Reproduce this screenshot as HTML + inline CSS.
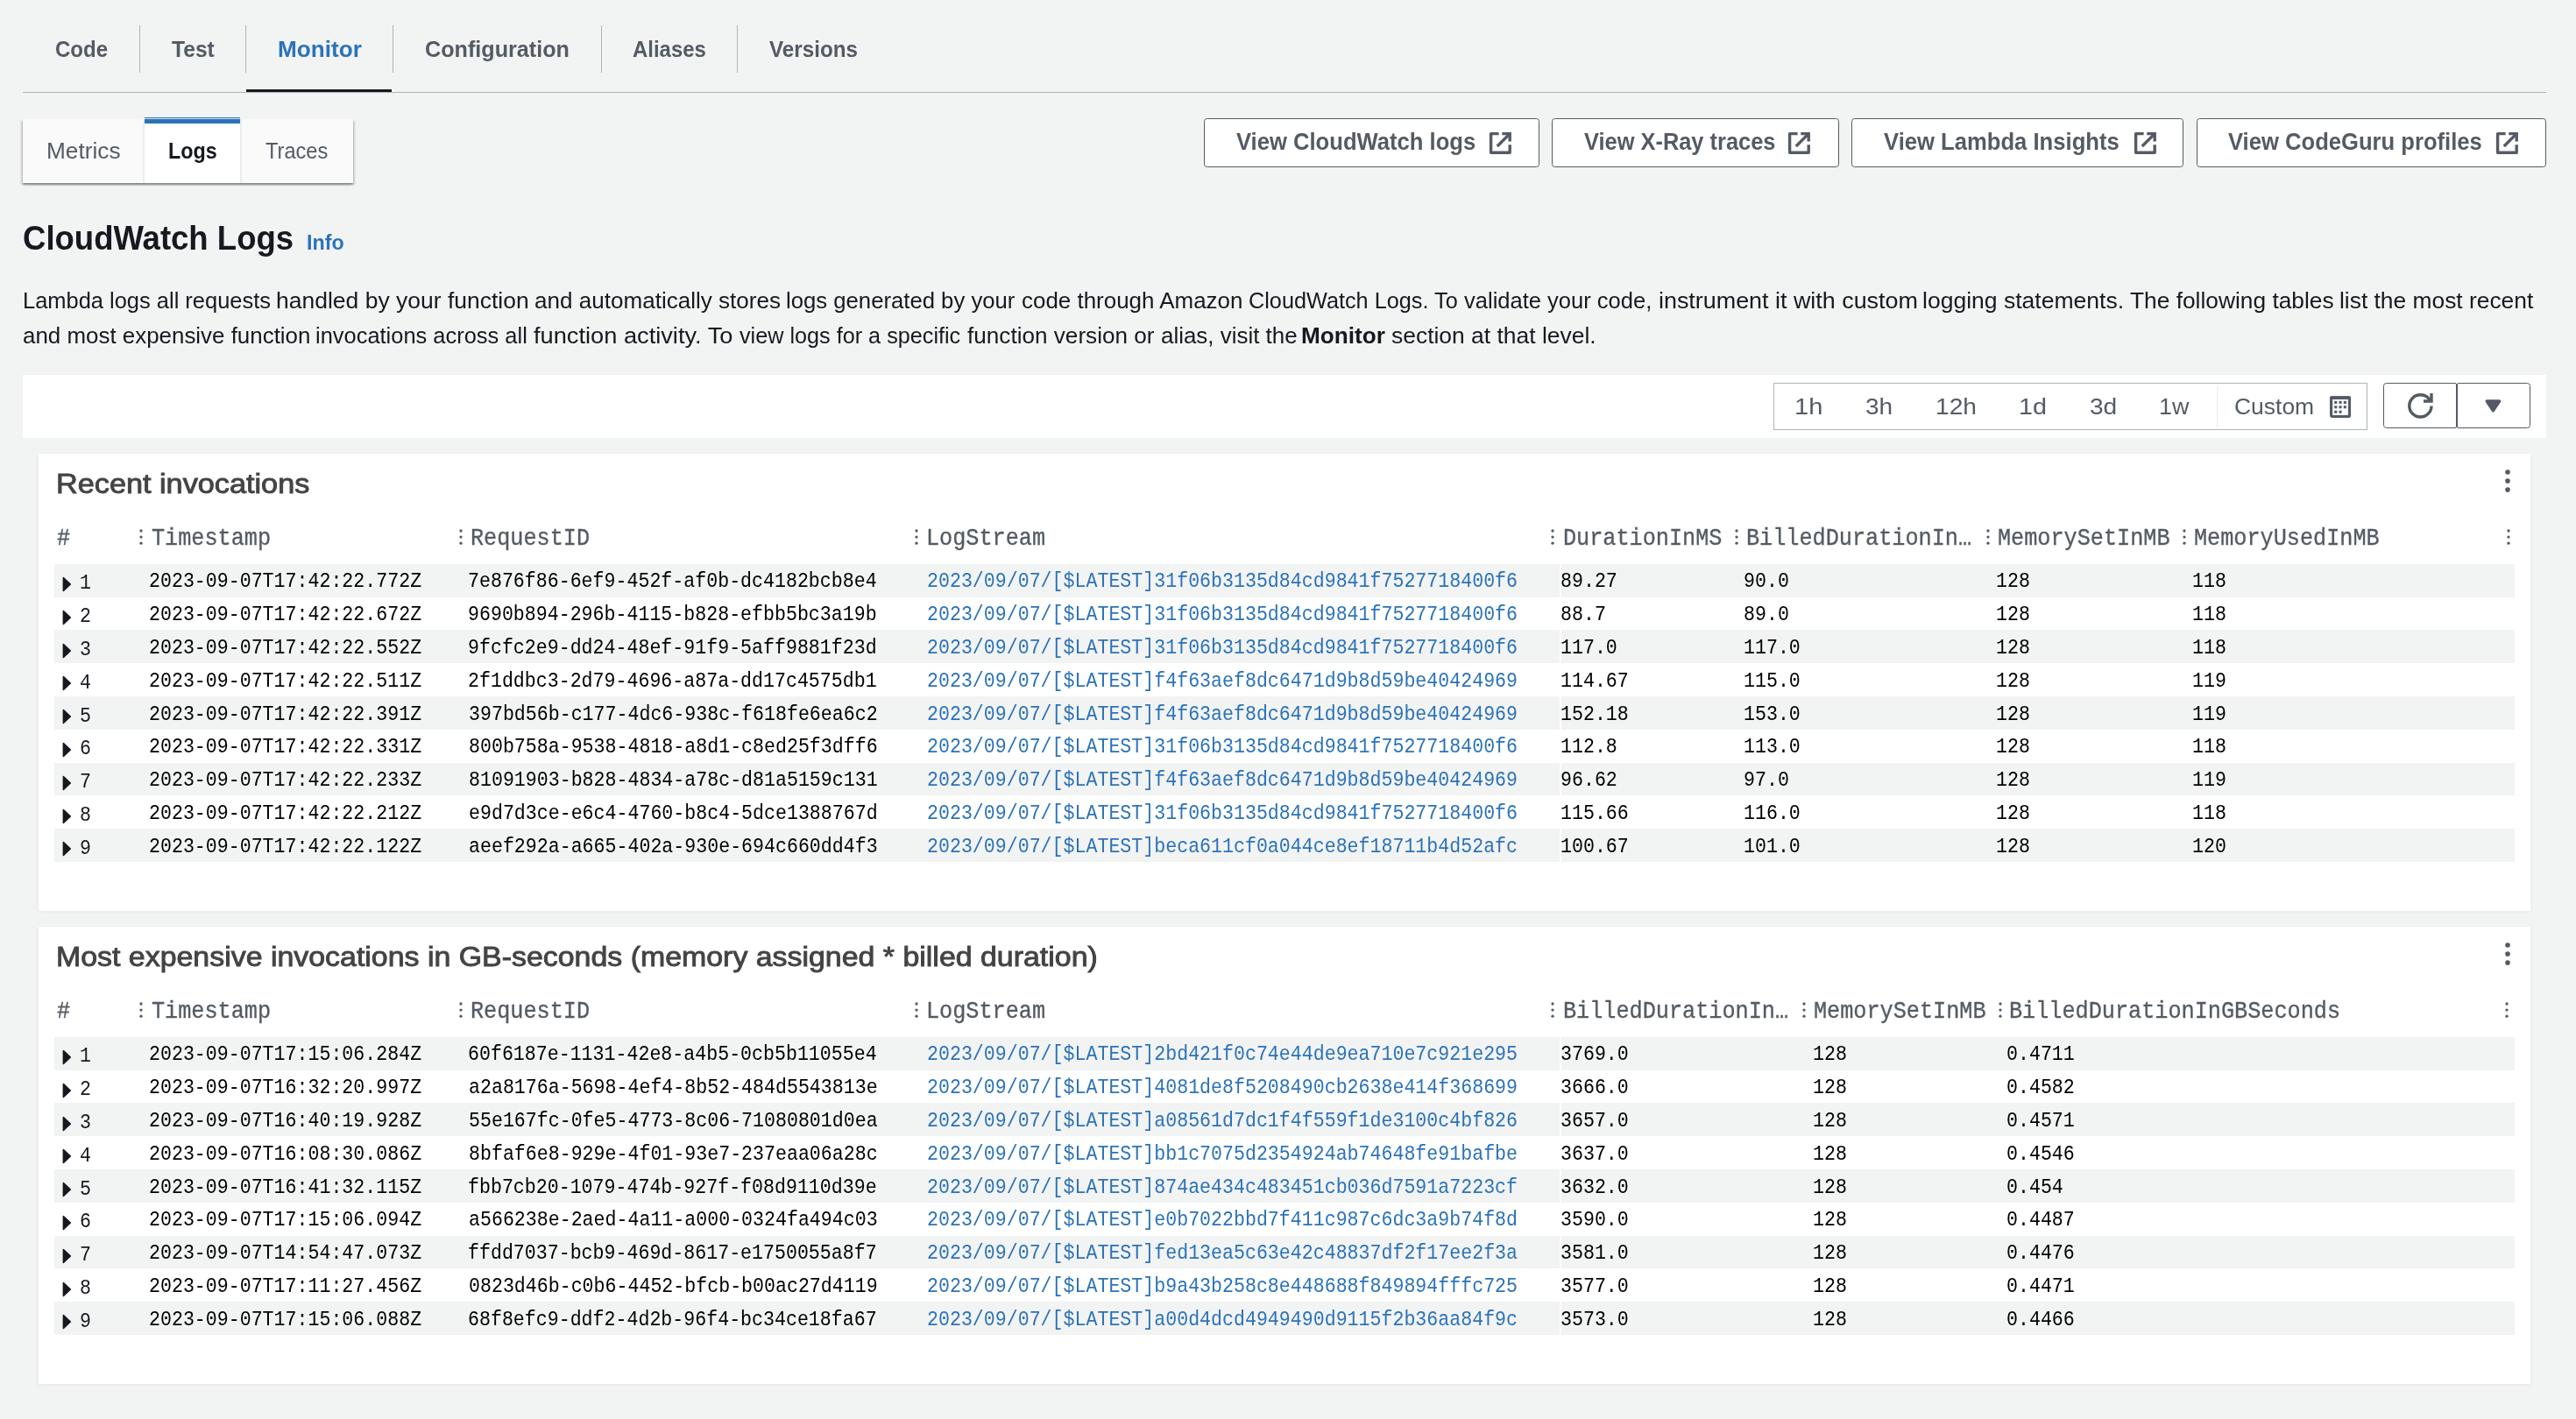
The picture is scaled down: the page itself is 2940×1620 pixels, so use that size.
<!DOCTYPE html>
<html lang="en"><head><meta charset="utf-8"><title>Lambda – Monitor – Logs</title>
<style>
html,body{margin:0;padding:0}
body{width:2940px;height:1620px;overflow:hidden;background:#f2f3f3;position:relative;font-family:"Liberation Sans",sans-serif;color:#16191f}
main,div,span,a,b,i,h1,h2,h3,p,nav,section,header,button,svg{position:absolute;margin:0;padding:0;box-sizing:border-box}
main{left:0;top:0;width:2940px;height:1620px;will-change:transform}
.t{white-space:pre;line-height:1;transform-origin:0 0;font-weight:400;text-decoration:none;font-family:"Liberation Sans",sans-serif}
.b{font-weight:700}
.m{font-family:"Liberation Mono",monospace}
.ms{-webkit-text-stroke:0.35px currentColor}
.wt{-webkit-text-stroke:0.9px #444}
.vsep{background:#aab7b8}
.btn{background:#fff;border:1.5px solid #545b64;border-radius:3.6px}
.ic{width:28.8px;height:28.8px;fill:none;stroke:#545b64;stroke-width:1.9}
.widget{background:#fff;left:44px;width:2844px;height:522px;box-shadow:0 0.5px 5px rgba(0,0,0,.06)}
.row{left:62.2px;width:2807.6px;height:37.8px}
.row.odd{background:#f2f3f3}
.dots{fill:#545b64}
.tri{width:11px;height:18px;fill:#16191f;stroke:#16191f;stroke-width:1.6;stroke-linejoin:round}
</style></head><body>
<main>

<nav aria-label="Function tabs">
<div class="" style="left:26px;top:104.8px;width:2880px;height:1.2px;background:#aab7b8"></div>
<div class="vsep" style="left:158.8px;top:29.0px;width:1.2px;height:53.9px;"></div>
<div class="vsep" style="left:279.8px;top:29.0px;width:1.2px;height:53.9px;"></div>
<div class="vsep" style="left:448.0px;top:29.0px;width:1.2px;height:53.9px;"></div>
<div class="vsep" style="left:685.8px;top:29.0px;width:1.2px;height:53.9px;"></div>
<div class="vsep" style="left:841.0px;top:29.0px;width:1.2px;height:53.9px;"></div>
<a class="t b" style="left:62.8px;top:42.58px;font-size:26.6px;transform:scaleX(0.9039);color:#545b64">Code</a>
<a class="t b" style="left:195.67px;top:42.58px;font-size:26.6px;transform:scaleX(0.9263);color:#545b64">Test</a>
<a class="t b" style="left:316.58px;top:42.58px;font-size:26.6px;transform:scaleX(0.9837);color:#2b73b9">Monitor</a>
<a class="t b" style="left:485.15px;top:42.58px;font-size:26.6px;transform:scaleX(0.9461);color:#545b64">Configuration</a>
<a class="t b" style="left:722.13px;top:42.58px;font-size:26.6px;transform:scaleX(0.8997);color:#545b64">Aliases</a>
<a class="t b" style="left:878.07px;top:42.58px;font-size:26.6px;transform:scaleX(0.9105);color:#545b64">Versions</a>
<div class="" style="left:281.0px;top:102.0px;width:166.0px;height:2.9px;background:#16191f"></div>
</nav>
<div class="" style="left:25.8px;top:135.8px;width:377.3px;height:72.9px;background:#fafafa;box-shadow:0 1.8px 1.8px 0 rgba(0,28,36,.3),1.8px 1.8px 1.8px 0 rgba(0,28,36,.15),-1.8px 1.8px 1.8px 0 rgba(0,28,36,.15)"><div class="" style="left:137.3px;top:0px;width:1.8px;height:72.9px;background:#eaeded"></div><div class="" style="left:248.4px;top:0px;width:1.8px;height:72.9px;background:#eaeded"></div><div class="" style="left:139.1px;top:0px;width:109.2px;height:72.9px;background:#fff"></div><div class="" style="left:139.1px;top:-1.8px;width:109.2px;height:6.7px;background:#2b73b9"></div><div class="" style="left:139.1px;top:-0.6px;width:109.2px;height:0.8px;background:rgba(255,255,255,.8)"></div></div>
<a class="t" style="left:52.64px;top:158.85px;font-size:26.16px;transform:scaleX(1.0025);color:#545b64">Metrics</a>
<a class="t b" style="left:192.34px;top:158.85px;font-size:26.16px;transform:scaleX(0.8921);color:#16191f">Logs</a>
<a class="t" style="left:303.45px;top:158.85px;font-size:26.16px;transform:scaleX(0.9032);color:#545b64">Traces</a>
<div class="btn" style="left:1373.8px;top:134.9px;width:383.2px;height:56.2px;"></div>
<span class="t b" style="left:1410.96px;top:149.46px;font-size:26.74px;transform:scaleX(0.9579);color:#545b64">View CloudWatch logs</span>
<svg class="ic" viewBox="0 0 16 16" style="left:1698.1px;top:148.8px"><path d="M10 2h4v4" stroke-linecap="square"/><path d="m6 10 8-8"/><path d="M14 9.048V14H2V2h5" stroke-linejoin="round"/></svg>
<div class="btn" style="left:1771.1px;top:134.9px;width:327.8px;height:56.2px;"></div>
<span class="t b" style="left:1807.86px;top:149.46px;font-size:26.74px;transform:scaleX(0.9501);color:#545b64">View X-Ray traces</span>
<svg class="ic" viewBox="0 0 16 16" style="left:2039.2px;top:148.8px"><path d="M10 2h4v4" stroke-linecap="square"/><path d="m6 10 8-8"/><path d="M14 9.048V14H2V2h5" stroke-linejoin="round"/></svg>
<div class="btn" style="left:2112.9px;top:134.9px;width:379.2px;height:56.2px;"></div>
<span class="t b" style="left:2150.26px;top:149.46px;font-size:26.74px;transform:scaleX(0.9588);color:#545b64">View Lambda Insights</span>
<svg class="ic" viewBox="0 0 16 16" style="left:2434.1px;top:148.8px"><path d="M10 2h4v4" stroke-linecap="square"/><path d="m6 10 8-8"/><path d="M14 9.048V14H2V2h5" stroke-linejoin="round"/></svg>
<div class="btn" style="left:2506.9px;top:134.9px;width:399.2px;height:56.2px;"></div>
<span class="t b" style="left:2543.26px;top:149.46px;font-size:26.74px;transform:scaleX(0.9577);color:#545b64">View CodeGuru profiles</span>
<svg class="ic" viewBox="0 0 16 16" style="left:2846.6px;top:148.8px"><path d="M10 2h4v4" stroke-linecap="square"/><path d="m6 10 8-8"/><path d="M14 9.048V14H2V2h5" stroke-linejoin="round"/></svg>
<h2 class="t b" style="left:25.69px;top:252.31px;font-size:39.68px;transform:scaleX(0.9207);color:#16191f">CloudWatch Logs</h2>
<a class="t b" style="left:350.41px;top:266.09px;font-size:23.4px;transform:scaleX(0.9951);color:#2b73b9">Info</a>
<p style="left:0;top:0"><span class="t" style="left:25.71px;top:330.45px;font-size:26.16px;transform:scaleX(0.9732);color:#16191f">Lambda logs all requests</span><span class="t" style="left:314.93px;top:330.45px;font-size:26.16px;transform:scaleX(1.0128);color:#16191f">handled by your function</span><span class="t" style="left:609.8px;top:330.45px;font-size:26.16px;transform:scaleX(0.9964);color:#16191f">and automatically stores</span><span class="t" style="left:897.08px;top:330.45px;font-size:26.16px;transform:scaleX(0.9822);color:#16191f">logs generated by your</span><span class="t" style="left:1166.11px;top:330.45px;font-size:26.16px;transform:scaleX(0.9919);color:#16191f">code through Amazon</span><span class="t" style="left:1424.59px;top:330.45px;font-size:26.16px;transform:scaleX(0.9659);color:#16191f">CloudWatch Logs. To</span><span class="t" style="left:1670.96px;top:330.45px;font-size:26.16px;transform:scaleX(0.976);color:#16191f">validate your code,</span><span class="t" style="left:1893.1px;top:330.45px;font-size:26.16px;transform:scaleX(1.028);color:#16191f">instrument it with custom</span><span class="t" style="left:2194.32px;top:330.45px;font-size:26.16px;transform:scaleX(1.0146);color:#16191f">logging statements.</span><span class="t" style="left:2430.6px;top:330.45px;font-size:26.16px;transform:scaleX(1.0063);color:#16191f">The following tables</span><span class="t" style="left:2669.54px;top:330.45px;font-size:26.16px;transform:scaleX(1.0078);color:#16191f">list the most recent</span><span class="t" style="left:25.91px;top:370.45px;font-size:26.16px;transform:scaleX(0.9907);color:#16191f">and most expensive function</span><span class="t" style="left:359.9px;top:370.45px;font-size:26.16px;transform:scaleX(0.9727);color:#16191f">invocations across all</span><span class="t" style="left:608.64px;top:370.45px;font-size:26.16px;transform:scaleX(1.0407);color:#16191f">function activity. To</span><span class="t" style="left:843.76px;top:370.45px;font-size:26.16px;transform:scaleX(0.9638);color:#16191f">view logs for a specific</span><span class="t" style="left:1104.05px;top:370.45px;font-size:26.16px;transform:scaleX(0.9991);color:#16191f">function version or</span><span class="t" style="left:1325.11px;top:370.45px;font-size:26.16px;transform:scaleX(0.9913);color:#16191f">alias, visit the</span><b class="t b" style="left:1485.25px;top:370.45px;font-size:26.16px;transform:scaleX(1.0005);color:#16191f">Monitor</b><span class="t" style="left:1587.74px;top:370.45px;font-size:26.16px;transform:scaleX(1.0105);color:#16191f">section at that level.</span></p>
<div class="" style="left:26px;top:428px;width:2880px;height:72px;background:#fff"></div>
<div class="" style="left:2024.0px;top:437.2px;width:677.9px;height:53.5px;border:1.3px solid #aab7b8;background:#fff"></div>
<div class="" style="left:2529.5px;top:440px;width:1.4px;height:48px;background:#eaeded"></div>
<span class="t" style="left:2048.22px;top:451.08px;font-size:26.6px;transform:scaleX(1.0923);color:#545b64">1h</span>
<span class="t" style="left:2129.25px;top:451.08px;font-size:26.6px;transform:scaleX(1.0519);color:#545b64">3h</span>
<span class="t" style="left:2208.78px;top:451.08px;font-size:26.6px;transform:scaleX(1.0577);color:#545b64">12h</span>
<span class="t" style="left:2303.64px;top:451.08px;font-size:26.6px;transform:scaleX(1.0808);color:#545b64">1d</span>
<span class="t" style="left:2384.64px;top:451.08px;font-size:26.6px;transform:scaleX(1.0556);color:#545b64">3d</span>
<span class="t" style="left:2464.38px;top:451.08px;font-size:26.6px;transform:scaleX(1.0125);color:#545b64">1w</span>
<span class="t" style="left:2549.76px;top:451.08px;font-size:26.6px;transform:scaleX(0.9949);color:#545b64">Custom</span>
<svg style="left:2659px;top:451.7px;width:24.2px;height:25.2px" viewBox="0 0 24.2 25.2"><rect x="1.6" y="1.9" width="21" height="21.6" rx="1.6" fill="none" stroke="#545b64" stroke-width="3.2"/><rect x="0.2" y="0.3" width="23.8" height="3.6" rx="1.4" fill="#545b64"/><rect x="5.2" y="5.8" width="3.1" height="3.1" fill="#545b64"/><rect x="10.5" y="5.8" width="3.1" height="3.1" fill="#545b64"/><rect x="15.8" y="5.8" width="3.1" height="3.1" fill="#545b64"/><rect x="5.2" y="11.2" width="3.1" height="3.1" fill="#545b64"/><rect x="10.5" y="11.2" width="3.1" height="3.1" fill="#545b64"/><rect x="15.8" y="11.2" width="3.1" height="3.1" fill="#545b64"/><rect x="5.2" y="16.7" width="3.1" height="3.1" fill="#545b64"/><rect x="10.5" y="16.7" width="3.1" height="3.1" fill="#545b64"/></svg>
<div class="btn" style="left:2720.1px;top:437.0px;width:83.9px;height:51.8px;border-radius:3.6px 2px 2px 3.6px"></div>
<div class="btn" style="left:2803.6px;top:437.0px;width:84.3px;height:51.8px;border-radius:2px 3.6px 3.6px 2px"></div>
<svg class="ic" viewBox="0 0 16 16" style="left:2748px;top:448.9px"><path d="M10 5h5V0"/><path d="M15 8a6.957 6.957 0 0 1-7 7 6.957 6.957 0 0 1-7-7 6.957 6.957 0 0 1 7-7 6.87 6.87 0 0 1 6.3 4"/></svg>
<svg class="ic" viewBox="0 0 16 16" style="left:2830.9px;top:449.2px"><path d="M4 5h8l-4 6-4-6z" fill="#545b64" stroke-linejoin="round"/></svg>
<section class="widget" style="top:518.0px"></section>
<h3 class="t wt" style="left:64.05px;top:536.57px;font-size:31.1px;transform:scaleX(1.1012);color:#444444">Recent invocations</h3>
<svg class="dots" style="left:2857.5px;top:535.4px;width:8px;height:28px" viewBox="0 0 8 28"><circle cx="4" cy="4" r="2.8"/><circle cx="4" cy="14.1" r="2.8"/><circle cx="4" cy="24.1" r="2.8"/></svg>
<svg class="dots" style="left:158.3px;top:603.4px;width:6px;height:20px" viewBox="0 0 6 20"><circle cx="3" cy="3" r="1.65"/><circle cx="3" cy="10.1" r="1.65"/><circle cx="3" cy="17.2" r="1.65"/></svg>
<svg class="dots" style="left:523px;top:603.4px;width:6px;height:20px" viewBox="0 0 6 20"><circle cx="3" cy="3" r="1.65"/><circle cx="3" cy="10.1" r="1.65"/><circle cx="3" cy="17.2" r="1.65"/></svg>
<svg class="dots" style="left:1042.5px;top:603.4px;width:6px;height:20px" viewBox="0 0 6 20"><circle cx="3" cy="3" r="1.65"/><circle cx="3" cy="10.1" r="1.65"/><circle cx="3" cy="17.2" r="1.65"/></svg>
<svg class="dots" style="left:1769.4px;top:603.4px;width:6px;height:20px" viewBox="0 0 6 20"><circle cx="3" cy="3" r="1.65"/><circle cx="3" cy="10.1" r="1.65"/><circle cx="3" cy="17.2" r="1.65"/></svg>
<svg class="dots" style="left:1979.3px;top:603.4px;width:6px;height:20px" viewBox="0 0 6 20"><circle cx="3" cy="3" r="1.65"/><circle cx="3" cy="10.1" r="1.65"/><circle cx="3" cy="17.2" r="1.65"/></svg>
<svg class="dots" style="left:2266.1px;top:603.4px;width:6px;height:20px" viewBox="0 0 6 20"><circle cx="3" cy="3" r="1.65"/><circle cx="3" cy="10.1" r="1.65"/><circle cx="3" cy="17.2" r="1.65"/></svg>
<svg class="dots" style="left:2489.9px;top:603.4px;width:6px;height:20px" viewBox="0 0 6 20"><circle cx="3" cy="3" r="1.65"/><circle cx="3" cy="10.1" r="1.65"/><circle cx="3" cy="17.2" r="1.65"/></svg>
<svg class="dots" style="left:2860.1px;top:603.4px;width:6px;height:20px" viewBox="0 0 6 20"><circle cx="3" cy="3" r="1.65"/><circle cx="3" cy="10.1" r="1.65"/><circle cx="3" cy="17.2" r="1.65"/></svg>
<span class="t m ms" style="left:65.22px;top:600.86px;font-size:27.85px;transform:scaleX(0.905);color:#545b64">#</span>
<span class="t m ms" style="left:173.19px;top:600.86px;font-size:27.85px;transform:scaleX(0.905);color:#545b64">Timestamp</span>
<span class="t m ms" style="left:536.66px;top:600.86px;font-size:27.85px;transform:scaleX(0.905);color:#545b64">RequestID</span>
<span class="t m ms" style="left:1056.56px;top:600.86px;font-size:27.85px;transform:scaleX(0.905);color:#545b64">LogStream</span>
<span class="t m ms" style="left:1783.86px;top:600.86px;font-size:27.85px;transform:scaleX(0.905);color:#545b64">DurationInMS</span>
<span class="t m ms" style="left:1993.26px;top:600.86px;font-size:27.85px;transform:scaleX(0.905);color:#545b64">BilledDurationIn…</span>
<span class="t m ms" style="left:2279.72px;top:600.86px;font-size:27.85px;transform:scaleX(0.905);color:#545b64">MemorySetInMB</span>
<span class="t m ms" style="left:2503.92px;top:600.86px;font-size:27.85px;transform:scaleX(0.905);color:#545b64">MemoryUsedInMB</span>
<div class="row odd" style="left:62.2px;top:643.8px;width:2807.6px;height:37.8px;"><div class="" style="left:1718.2px;top:0px;width:1.3px;height:37.8px;background:#fff"></div></div>
<svg class="tri" viewBox="0 0 11 18" style="left:71.2px;top:657.9px"><path d="M1.4 1.6L9.3 9L1.4 16.4Z"/></svg>
<span class="t m" style="left:91.04px;top:654.48px;font-size:24.3px;transform:scaleX(0.889);color:#16191f">1</span>
<span class="t m" style="left:170.24px;top:652.48px;font-size:24.3px;transform:scaleX(0.889);color:#000">2023-09-07T17:42:22.772Z</span>
<span class="t m" style="left:534.12px;top:652.48px;font-size:24.3px;transform:scaleX(0.889);color:#000">7e876f86-6ef9-452f-af0b-dc4182bcb8e4</span>
<a class="t m" style="left:1057.94px;top:652.48px;font-size:24.3px;transform:scaleX(0.889);color:#2b73b9">2023/09/07/[$LATEST]31f06b3135d84cd9841f7527718400f6</a>
<span class="t m" style="left:1781.47px;top:652.48px;font-size:24.3px;transform:scaleX(0.889);color:#000">89.27</span>
<span class="t m" style="left:1990.14px;top:652.48px;font-size:24.3px;transform:scaleX(0.889);color:#000">90.0</span>
<span class="t m" style="left:2278.34px;top:652.48px;font-size:24.3px;transform:scaleX(0.889);color:#000">128</span>
<span class="t m" style="left:2501.74px;top:652.48px;font-size:24.3px;transform:scaleX(0.889);color:#000">118</span>
<div class="row" style="left:62.2px;top:681.6px;width:2807.6px;height:37.8px;"></div>
<svg class="tri" viewBox="0 0 11 18" style="left:71.2px;top:695.7px"><path d="M1.4 1.6L9.3 9L1.4 16.4Z"/></svg>
<span class="t m" style="left:91.04px;top:692.28px;font-size:24.3px;transform:scaleX(0.889);color:#16191f">2</span>
<span class="t m" style="left:170.24px;top:690.28px;font-size:24.3px;transform:scaleX(0.889);color:#000">2023-09-07T17:42:22.672Z</span>
<span class="t m" style="left:534.34px;top:690.28px;font-size:24.3px;transform:scaleX(0.889);color:#000">9690b894-296b-4115-b828-efbb5bc3a19b</span>
<a class="t m" style="left:1057.94px;top:690.28px;font-size:24.3px;transform:scaleX(0.889);color:#2b73b9">2023/09/07/[$LATEST]31f06b3135d84cd9841f7527718400f6</a>
<span class="t m" style="left:1781.47px;top:690.28px;font-size:24.3px;transform:scaleX(0.889);color:#000">88.7</span>
<span class="t m" style="left:1990.37px;top:690.28px;font-size:24.3px;transform:scaleX(0.889);color:#000">89.0</span>
<span class="t m" style="left:2278.34px;top:690.28px;font-size:24.3px;transform:scaleX(0.889);color:#000">128</span>
<span class="t m" style="left:2501.74px;top:690.28px;font-size:24.3px;transform:scaleX(0.889);color:#000">118</span>
<div class="row odd" style="left:62.2px;top:719.4px;width:2807.6px;height:37.8px;"><div class="" style="left:1718.2px;top:0px;width:1.3px;height:37.8px;background:#fff"></div></div>
<svg class="tri" viewBox="0 0 11 18" style="left:71.2px;top:733.5px"><path d="M1.4 1.6L9.3 9L1.4 16.4Z"/></svg>
<span class="t m" style="left:91.27px;top:730.08px;font-size:24.3px;transform:scaleX(0.889);color:#16191f">3</span>
<span class="t m" style="left:170.24px;top:728.08px;font-size:24.3px;transform:scaleX(0.889);color:#000">2023-09-07T17:42:22.552Z</span>
<span class="t m" style="left:534.34px;top:728.08px;font-size:24.3px;transform:scaleX(0.889);color:#000">9fcfc2e9-dd24-48ef-91f9-5aff9881f23d</span>
<a class="t m" style="left:1057.94px;top:728.08px;font-size:24.3px;transform:scaleX(0.889);color:#2b73b9">2023/09/07/[$LATEST]31f06b3135d84cd9841f7527718400f6</a>
<span class="t m" style="left:1781.24px;top:728.08px;font-size:24.3px;transform:scaleX(0.889);color:#000">117.0</span>
<span class="t m" style="left:1990.14px;top:728.08px;font-size:24.3px;transform:scaleX(0.889);color:#000">117.0</span>
<span class="t m" style="left:2278.34px;top:728.08px;font-size:24.3px;transform:scaleX(0.889);color:#000">128</span>
<span class="t m" style="left:2501.74px;top:728.08px;font-size:24.3px;transform:scaleX(0.889);color:#000">118</span>
<div class="row" style="left:62.2px;top:757.2px;width:2807.6px;height:37.8px;"></div>
<svg class="tri" viewBox="0 0 11 18" style="left:71.2px;top:771.3px"><path d="M1.4 1.6L9.3 9L1.4 16.4Z"/></svg>
<span class="t m" style="left:91.49px;top:767.88px;font-size:24.3px;transform:scaleX(0.889);color:#16191f">4</span>
<span class="t m" style="left:170.24px;top:765.88px;font-size:24.3px;transform:scaleX(0.889);color:#000">2023-09-07T17:42:22.511Z</span>
<span class="t m" style="left:534.34px;top:765.88px;font-size:24.3px;transform:scaleX(0.889);color:#000">2f1ddbc3-2d79-4696-a87a-dd17c4575db1</span>
<a class="t m" style="left:1057.94px;top:765.88px;font-size:24.3px;transform:scaleX(0.889);color:#2b73b9">2023/09/07/[$LATEST]f4f63aef8dc6471d9b8d59be40424969</a>
<span class="t m" style="left:1781.24px;top:765.88px;font-size:24.3px;transform:scaleX(0.889);color:#000">114.67</span>
<span class="t m" style="left:1990.14px;top:765.88px;font-size:24.3px;transform:scaleX(0.889);color:#000">115.0</span>
<span class="t m" style="left:2278.34px;top:765.88px;font-size:24.3px;transform:scaleX(0.889);color:#000">128</span>
<span class="t m" style="left:2501.74px;top:765.88px;font-size:24.3px;transform:scaleX(0.889);color:#000">119</span>
<div class="row odd" style="left:62.2px;top:795.0px;width:2807.6px;height:37.8px;"><div class="" style="left:1718.2px;top:0px;width:1.3px;height:37.8px;background:#fff"></div></div>
<svg class="tri" viewBox="0 0 11 18" style="left:71.2px;top:809.1px"><path d="M1.4 1.6L9.3 9L1.4 16.4Z"/></svg>
<span class="t m" style="left:91.27px;top:805.68px;font-size:24.3px;transform:scaleX(0.889);color:#16191f">5</span>
<span class="t m" style="left:170.24px;top:803.68px;font-size:24.3px;transform:scaleX(0.889);color:#000">2023-09-07T17:42:22.391Z</span>
<span class="t m" style="left:534.57px;top:803.68px;font-size:24.3px;transform:scaleX(0.889);color:#000">397bd56b-c177-4dc6-938c-f618fe6ea6c2</span>
<a class="t m" style="left:1057.94px;top:803.68px;font-size:24.3px;transform:scaleX(0.889);color:#2b73b9">2023/09/07/[$LATEST]f4f63aef8dc6471d9b8d59be40424969</a>
<span class="t m" style="left:1781.24px;top:803.68px;font-size:24.3px;transform:scaleX(0.889);color:#000">152.18</span>
<span class="t m" style="left:1990.14px;top:803.68px;font-size:24.3px;transform:scaleX(0.889);color:#000">153.0</span>
<span class="t m" style="left:2278.34px;top:803.68px;font-size:24.3px;transform:scaleX(0.889);color:#000">128</span>
<span class="t m" style="left:2501.74px;top:803.68px;font-size:24.3px;transform:scaleX(0.889);color:#000">119</span>
<div class="row" style="left:62.2px;top:832.8px;width:2807.6px;height:37.8px;"></div>
<svg class="tri" viewBox="0 0 11 18" style="left:71.2px;top:846.9px"><path d="M1.4 1.6L9.3 9L1.4 16.4Z"/></svg>
<span class="t m" style="left:91.04px;top:843.48px;font-size:24.3px;transform:scaleX(0.889);color:#16191f">6</span>
<span class="t m" style="left:170.24px;top:841.48px;font-size:24.3px;transform:scaleX(0.889);color:#000">2023-09-07T17:42:22.331Z</span>
<span class="t m" style="left:534.57px;top:841.48px;font-size:24.3px;transform:scaleX(0.889);color:#000">800b758a-9538-4818-a8d1-c8ed25f3dff6</span>
<a class="t m" style="left:1057.94px;top:841.48px;font-size:24.3px;transform:scaleX(0.889);color:#2b73b9">2023/09/07/[$LATEST]31f06b3135d84cd9841f7527718400f6</a>
<span class="t m" style="left:1781.24px;top:841.48px;font-size:24.3px;transform:scaleX(0.889);color:#000">112.8</span>
<span class="t m" style="left:1990.14px;top:841.48px;font-size:24.3px;transform:scaleX(0.889);color:#000">113.0</span>
<span class="t m" style="left:2278.34px;top:841.48px;font-size:24.3px;transform:scaleX(0.889);color:#000">128</span>
<span class="t m" style="left:2501.74px;top:841.48px;font-size:24.3px;transform:scaleX(0.889);color:#000">118</span>
<div class="row odd" style="left:62.2px;top:870.6px;width:2807.6px;height:37.8px;"><div class="" style="left:1718.2px;top:0px;width:1.3px;height:37.8px;background:#fff"></div></div>
<svg class="tri" viewBox="0 0 11 18" style="left:71.2px;top:884.7px"><path d="M1.4 1.6L9.3 9L1.4 16.4Z"/></svg>
<span class="t m" style="left:90.82px;top:881.28px;font-size:24.3px;transform:scaleX(0.889);color:#16191f">7</span>
<span class="t m" style="left:170.24px;top:879.28px;font-size:24.3px;transform:scaleX(0.889);color:#000">2023-09-07T17:42:22.233Z</span>
<span class="t m" style="left:534.57px;top:879.28px;font-size:24.3px;transform:scaleX(0.889);color:#000">81091903-b828-4834-a78c-d81a5159c131</span>
<a class="t m" style="left:1057.94px;top:879.28px;font-size:24.3px;transform:scaleX(0.889);color:#2b73b9">2023/09/07/[$LATEST]f4f63aef8dc6471d9b8d59be40424969</a>
<span class="t m" style="left:1781.24px;top:879.28px;font-size:24.3px;transform:scaleX(0.889);color:#000">96.62</span>
<span class="t m" style="left:1990.14px;top:879.28px;font-size:24.3px;transform:scaleX(0.889);color:#000">97.0</span>
<span class="t m" style="left:2278.34px;top:879.28px;font-size:24.3px;transform:scaleX(0.889);color:#000">128</span>
<span class="t m" style="left:2501.74px;top:879.28px;font-size:24.3px;transform:scaleX(0.889);color:#000">119</span>
<div class="row" style="left:62.2px;top:908.4px;width:2807.6px;height:37.8px;"></div>
<svg class="tri" viewBox="0 0 11 18" style="left:71.2px;top:922.5px"><path d="M1.4 1.6L9.3 9L1.4 16.4Z"/></svg>
<span class="t m" style="left:91.27px;top:919.08px;font-size:24.3px;transform:scaleX(0.889);color:#16191f">8</span>
<span class="t m" style="left:170.24px;top:917.08px;font-size:24.3px;transform:scaleX(0.889);color:#000">2023-09-07T17:42:22.212Z</span>
<span class="t m" style="left:534.57px;top:917.08px;font-size:24.3px;transform:scaleX(0.889);color:#000">e9d7d3ce-e6c4-4760-b8c4-5dce1388767d</span>
<a class="t m" style="left:1057.94px;top:917.08px;font-size:24.3px;transform:scaleX(0.889);color:#2b73b9">2023/09/07/[$LATEST]31f06b3135d84cd9841f7527718400f6</a>
<span class="t m" style="left:1781.24px;top:917.08px;font-size:24.3px;transform:scaleX(0.889);color:#000">115.66</span>
<span class="t m" style="left:1990.14px;top:917.08px;font-size:24.3px;transform:scaleX(0.889);color:#000">116.0</span>
<span class="t m" style="left:2278.34px;top:917.08px;font-size:24.3px;transform:scaleX(0.889);color:#000">128</span>
<span class="t m" style="left:2501.74px;top:917.08px;font-size:24.3px;transform:scaleX(0.889);color:#000">118</span>
<div class="row odd" style="left:62.2px;top:946.2px;width:2807.6px;height:37.8px;"><div class="" style="left:1718.2px;top:0px;width:1.3px;height:37.8px;background:#fff"></div></div>
<svg class="tri" viewBox="0 0 11 18" style="left:71.2px;top:960.3px"><path d="M1.4 1.6L9.3 9L1.4 16.4Z"/></svg>
<span class="t m" style="left:91.04px;top:956.88px;font-size:24.3px;transform:scaleX(0.889);color:#16191f">9</span>
<span class="t m" style="left:170.24px;top:954.88px;font-size:24.3px;transform:scaleX(0.889);color:#000">2023-09-07T17:42:22.122Z</span>
<span class="t m" style="left:534.57px;top:954.88px;font-size:24.3px;transform:scaleX(0.889);color:#000">aeef292a-a665-402a-930e-694c660dd4f3</span>
<a class="t m" style="left:1057.94px;top:954.88px;font-size:24.3px;transform:scaleX(0.889);color:#2b73b9">2023/09/07/[$LATEST]beca611cf0a044ce8ef18711b4d52afc</a>
<span class="t m" style="left:1781.24px;top:954.88px;font-size:24.3px;transform:scaleX(0.889);color:#000">100.67</span>
<span class="t m" style="left:1990.14px;top:954.88px;font-size:24.3px;transform:scaleX(0.889);color:#000">101.0</span>
<span class="t m" style="left:2278.34px;top:954.88px;font-size:24.3px;transform:scaleX(0.889);color:#000">128</span>
<span class="t m" style="left:2501.74px;top:954.88px;font-size:24.3px;transform:scaleX(0.889);color:#000">120</span>
<section class="widget" style="top:1058.0px"></section>
<h3 class="t wt" style="left:64.07px;top:1076.57px;font-size:31.1px;transform:scaleX(1.0901);color:#444444">Most expensive invocations in GB-seconds (memory assigned * billed duration)</h3>
<svg class="dots" style="left:2857.5px;top:1075.4px;width:8px;height:28px" viewBox="0 0 8 28"><circle cx="4" cy="4" r="2.8"/><circle cx="4" cy="14.1" r="2.8"/><circle cx="4" cy="24.1" r="2.8"/></svg>
<svg class="dots" style="left:158.3px;top:1143.4px;width:6px;height:20px" viewBox="0 0 6 20"><circle cx="3" cy="3" r="1.65"/><circle cx="3" cy="10.1" r="1.65"/><circle cx="3" cy="17.2" r="1.65"/></svg>
<svg class="dots" style="left:523px;top:1143.4px;width:6px;height:20px" viewBox="0 0 6 20"><circle cx="3" cy="3" r="1.65"/><circle cx="3" cy="10.1" r="1.65"/><circle cx="3" cy="17.2" r="1.65"/></svg>
<svg class="dots" style="left:1042.5px;top:1143.4px;width:6px;height:20px" viewBox="0 0 6 20"><circle cx="3" cy="3" r="1.65"/><circle cx="3" cy="10.1" r="1.65"/><circle cx="3" cy="17.2" r="1.65"/></svg>
<svg class="dots" style="left:1769.4px;top:1143.4px;width:6px;height:20px" viewBox="0 0 6 20"><circle cx="3" cy="3" r="1.65"/><circle cx="3" cy="10.1" r="1.65"/><circle cx="3" cy="17.2" r="1.65"/></svg>
<svg class="dots" style="left:2056.3px;top:1143.4px;width:6px;height:20px" viewBox="0 0 6 20"><circle cx="3" cy="3" r="1.65"/><circle cx="3" cy="10.1" r="1.65"/><circle cx="3" cy="17.2" r="1.65"/></svg>
<svg class="dots" style="left:2279.6px;top:1143.4px;width:6px;height:20px" viewBox="0 0 6 20"><circle cx="3" cy="3" r="1.65"/><circle cx="3" cy="10.1" r="1.65"/><circle cx="3" cy="17.2" r="1.65"/></svg>
<svg class="dots" style="left:2858.3px;top:1143.4px;width:6px;height:20px" viewBox="0 0 6 20"><circle cx="3" cy="3" r="1.65"/><circle cx="3" cy="10.1" r="1.65"/><circle cx="3" cy="17.2" r="1.65"/></svg>
<span class="t m ms" style="left:65.22px;top:1140.86px;font-size:27.85px;transform:scaleX(0.905);color:#545b64">#</span>
<span class="t m ms" style="left:173.19px;top:1140.86px;font-size:27.85px;transform:scaleX(0.905);color:#545b64">Timestamp</span>
<span class="t m ms" style="left:536.66px;top:1140.86px;font-size:27.85px;transform:scaleX(0.905);color:#545b64">RequestID</span>
<span class="t m ms" style="left:1056.56px;top:1140.86px;font-size:27.85px;transform:scaleX(0.905);color:#545b64">LogStream</span>
<span class="t m ms" style="left:1783.86px;top:1140.86px;font-size:27.85px;transform:scaleX(0.905);color:#545b64">BilledDurationIn…</span>
<span class="t m ms" style="left:2070.32px;top:1140.86px;font-size:27.85px;transform:scaleX(0.905);color:#545b64">MemorySetInMB</span>
<span class="t m ms" style="left:2292.76px;top:1140.86px;font-size:27.85px;transform:scaleX(0.905);color:#545b64">BilledDurationInGBSeconds</span>
<div class="row odd" style="left:62.2px;top:1183.8px;width:2807.6px;height:37.8px;"><div class="" style="left:1718.2px;top:0px;width:1.3px;height:37.8px;background:#fff"></div></div>
<svg class="tri" viewBox="0 0 11 18" style="left:71.2px;top:1197.9px"><path d="M1.4 1.6L9.3 9L1.4 16.4Z"/></svg>
<span class="t m" style="left:91.04px;top:1194.48px;font-size:24.3px;transform:scaleX(0.889);color:#16191f">1</span>
<span class="t m" style="left:170.24px;top:1192.48px;font-size:24.3px;transform:scaleX(0.889);color:#000">2023-09-07T17:15:06.284Z</span>
<span class="t m" style="left:534.34px;top:1192.48px;font-size:24.3px;transform:scaleX(0.889);color:#000">60f6187e-1131-42e8-a4b5-0cb5b11055e4</span>
<a class="t m" style="left:1057.94px;top:1192.48px;font-size:24.3px;transform:scaleX(0.889);color:#2b73b9">2023/09/07/[$LATEST]2bd421f0c74e44de9ea710e7c921e295</a>
<span class="t m" style="left:1781.47px;top:1192.48px;font-size:24.3px;transform:scaleX(0.889);color:#000">3769.0</span>
<span class="t m" style="left:2068.94px;top:1192.48px;font-size:24.3px;transform:scaleX(0.889);color:#000">128</span>
<span class="t m" style="left:2290.27px;top:1192.48px;font-size:24.3px;transform:scaleX(0.889);color:#000">0.4711</span>
<div class="row" style="left:62.2px;top:1221.6px;width:2807.6px;height:37.8px;"></div>
<svg class="tri" viewBox="0 0 11 18" style="left:71.2px;top:1235.7px"><path d="M1.4 1.6L9.3 9L1.4 16.4Z"/></svg>
<span class="t m" style="left:91.04px;top:1232.28px;font-size:24.3px;transform:scaleX(0.889);color:#16191f">2</span>
<span class="t m" style="left:170.24px;top:1230.28px;font-size:24.3px;transform:scaleX(0.889);color:#000">2023-09-07T16:32:20.997Z</span>
<span class="t m" style="left:534.57px;top:1230.28px;font-size:24.3px;transform:scaleX(0.889);color:#000">a2a8176a-5698-4ef4-8b52-484d5543813e</span>
<a class="t m" style="left:1057.94px;top:1230.28px;font-size:24.3px;transform:scaleX(0.889);color:#2b73b9">2023/09/07/[$LATEST]4081de8f5208490cb2638e414f368699</a>
<span class="t m" style="left:1781.47px;top:1230.28px;font-size:24.3px;transform:scaleX(0.889);color:#000">3666.0</span>
<span class="t m" style="left:2068.94px;top:1230.28px;font-size:24.3px;transform:scaleX(0.889);color:#000">128</span>
<span class="t m" style="left:2290.27px;top:1230.28px;font-size:24.3px;transform:scaleX(0.889);color:#000">0.4582</span>
<div class="row odd" style="left:62.2px;top:1259.4px;width:2807.6px;height:37.8px;"><div class="" style="left:1718.2px;top:0px;width:1.3px;height:37.8px;background:#fff"></div></div>
<svg class="tri" viewBox="0 0 11 18" style="left:71.2px;top:1273.5px"><path d="M1.4 1.6L9.3 9L1.4 16.4Z"/></svg>
<span class="t m" style="left:91.27px;top:1270.08px;font-size:24.3px;transform:scaleX(0.889);color:#16191f">3</span>
<span class="t m" style="left:170.24px;top:1268.08px;font-size:24.3px;transform:scaleX(0.889);color:#000">2023-09-07T16:40:19.928Z</span>
<span class="t m" style="left:534.57px;top:1268.08px;font-size:24.3px;transform:scaleX(0.889);color:#000">55e167fc-0fe5-4773-8c06-71080801d0ea</span>
<a class="t m" style="left:1057.94px;top:1268.08px;font-size:24.3px;transform:scaleX(0.889);color:#2b73b9">2023/09/07/[$LATEST]a08561d7dc1f4f559f1de3100c4bf826</a>
<span class="t m" style="left:1781.47px;top:1268.08px;font-size:24.3px;transform:scaleX(0.889);color:#000">3657.0</span>
<span class="t m" style="left:2068.94px;top:1268.08px;font-size:24.3px;transform:scaleX(0.889);color:#000">128</span>
<span class="t m" style="left:2290.27px;top:1268.08px;font-size:24.3px;transform:scaleX(0.889);color:#000">0.4571</span>
<div class="row" style="left:62.2px;top:1297.2px;width:2807.6px;height:37.8px;"></div>
<svg class="tri" viewBox="0 0 11 18" style="left:71.2px;top:1311.3px"><path d="M1.4 1.6L9.3 9L1.4 16.4Z"/></svg>
<span class="t m" style="left:91.49px;top:1307.88px;font-size:24.3px;transform:scaleX(0.889);color:#16191f">4</span>
<span class="t m" style="left:170.24px;top:1305.88px;font-size:24.3px;transform:scaleX(0.889);color:#000">2023-09-07T16:08:30.086Z</span>
<span class="t m" style="left:534.57px;top:1305.88px;font-size:24.3px;transform:scaleX(0.889);color:#000">8bfaf6e8-929e-4f01-93e7-237eaa06a28c</span>
<a class="t m" style="left:1057.94px;top:1305.88px;font-size:24.3px;transform:scaleX(0.889);color:#2b73b9">2023/09/07/[$LATEST]bb1c7075d2354924ab74648fe91bafbe</a>
<span class="t m" style="left:1781.47px;top:1305.88px;font-size:24.3px;transform:scaleX(0.889);color:#000">3637.0</span>
<span class="t m" style="left:2068.94px;top:1305.88px;font-size:24.3px;transform:scaleX(0.889);color:#000">128</span>
<span class="t m" style="left:2290.27px;top:1305.88px;font-size:24.3px;transform:scaleX(0.889);color:#000">0.4546</span>
<div class="row odd" style="left:62.2px;top:1335.0px;width:2807.6px;height:37.8px;"><div class="" style="left:1718.2px;top:0px;width:1.3px;height:37.8px;background:#fff"></div></div>
<svg class="tri" viewBox="0 0 11 18" style="left:71.2px;top:1349.1px"><path d="M1.4 1.6L9.3 9L1.4 16.4Z"/></svg>
<span class="t m" style="left:91.27px;top:1345.68px;font-size:24.3px;transform:scaleX(0.889);color:#16191f">5</span>
<span class="t m" style="left:170.24px;top:1343.68px;font-size:24.3px;transform:scaleX(0.889);color:#000">2023-09-07T16:41:32.115Z</span>
<span class="t m" style="left:534.34px;top:1343.68px;font-size:24.3px;transform:scaleX(0.889);color:#000">fbb7cb20-1079-474b-927f-f08d9110d39e</span>
<a class="t m" style="left:1057.94px;top:1343.68px;font-size:24.3px;transform:scaleX(0.889);color:#2b73b9">2023/09/07/[$LATEST]874ae434c483451cb036d7591a7223cf</a>
<span class="t m" style="left:1781.47px;top:1343.68px;font-size:24.3px;transform:scaleX(0.889);color:#000">3632.0</span>
<span class="t m" style="left:2068.94px;top:1343.68px;font-size:24.3px;transform:scaleX(0.889);color:#000">128</span>
<span class="t m" style="left:2290.27px;top:1343.68px;font-size:24.3px;transform:scaleX(0.889);color:#000">0.454</span>
<div class="row" style="left:62.2px;top:1372.8px;width:2807.6px;height:37.8px;"></div>
<svg class="tri" viewBox="0 0 11 18" style="left:71.2px;top:1386.9px"><path d="M1.4 1.6L9.3 9L1.4 16.4Z"/></svg>
<span class="t m" style="left:91.04px;top:1383.48px;font-size:24.3px;transform:scaleX(0.889);color:#16191f">6</span>
<span class="t m" style="left:170.24px;top:1381.48px;font-size:24.3px;transform:scaleX(0.889);color:#000">2023-09-07T17:15:06.094Z</span>
<span class="t m" style="left:534.57px;top:1381.48px;font-size:24.3px;transform:scaleX(0.889);color:#000">a566238e-2aed-4a11-a000-0324fa494c03</span>
<a class="t m" style="left:1057.94px;top:1381.48px;font-size:24.3px;transform:scaleX(0.889);color:#2b73b9">2023/09/07/[$LATEST]e0b7022bbd7f411c987c6dc3a9b74f8d</a>
<span class="t m" style="left:1781.47px;top:1381.48px;font-size:24.3px;transform:scaleX(0.889);color:#000">3590.0</span>
<span class="t m" style="left:2068.94px;top:1381.48px;font-size:24.3px;transform:scaleX(0.889);color:#000">128</span>
<span class="t m" style="left:2290.27px;top:1381.48px;font-size:24.3px;transform:scaleX(0.889);color:#000">0.4487</span>
<div class="row odd" style="left:62.2px;top:1410.6px;width:2807.6px;height:37.8px;"><div class="" style="left:1718.2px;top:0px;width:1.3px;height:37.8px;background:#fff"></div></div>
<svg class="tri" viewBox="0 0 11 18" style="left:71.2px;top:1424.7px"><path d="M1.4 1.6L9.3 9L1.4 16.4Z"/></svg>
<span class="t m" style="left:90.82px;top:1421.28px;font-size:24.3px;transform:scaleX(0.889);color:#16191f">7</span>
<span class="t m" style="left:170.24px;top:1419.28px;font-size:24.3px;transform:scaleX(0.889);color:#000">2023-09-07T14:54:47.073Z</span>
<span class="t m" style="left:534.34px;top:1419.28px;font-size:24.3px;transform:scaleX(0.889);color:#000">ffdd7037-bcb9-469d-8617-e1750055a8f7</span>
<a class="t m" style="left:1057.94px;top:1419.28px;font-size:24.3px;transform:scaleX(0.889);color:#2b73b9">2023/09/07/[$LATEST]fed13ea5c63e42c48837df2f17ee2f3a</a>
<span class="t m" style="left:1781.47px;top:1419.28px;font-size:24.3px;transform:scaleX(0.889);color:#000">3581.0</span>
<span class="t m" style="left:2068.94px;top:1419.28px;font-size:24.3px;transform:scaleX(0.889);color:#000">128</span>
<span class="t m" style="left:2290.27px;top:1419.28px;font-size:24.3px;transform:scaleX(0.889);color:#000">0.4476</span>
<div class="row" style="left:62.2px;top:1448.4px;width:2807.6px;height:37.8px;"></div>
<svg class="tri" viewBox="0 0 11 18" style="left:71.2px;top:1462.5px"><path d="M1.4 1.6L9.3 9L1.4 16.4Z"/></svg>
<span class="t m" style="left:91.27px;top:1459.08px;font-size:24.3px;transform:scaleX(0.889);color:#16191f">8</span>
<span class="t m" style="left:170.24px;top:1457.08px;font-size:24.3px;transform:scaleX(0.889);color:#000">2023-09-07T17:11:27.456Z</span>
<span class="t m" style="left:534.57px;top:1457.08px;font-size:24.3px;transform:scaleX(0.889);color:#000">0823d46b-c0b6-4452-bfcb-b00ac27d4119</span>
<a class="t m" style="left:1057.94px;top:1457.08px;font-size:24.3px;transform:scaleX(0.889);color:#2b73b9">2023/09/07/[$LATEST]b9a43b258c8e448688f849894fffc725</a>
<span class="t m" style="left:1781.47px;top:1457.08px;font-size:24.3px;transform:scaleX(0.889);color:#000">3577.0</span>
<span class="t m" style="left:2068.94px;top:1457.08px;font-size:24.3px;transform:scaleX(0.889);color:#000">128</span>
<span class="t m" style="left:2290.27px;top:1457.08px;font-size:24.3px;transform:scaleX(0.889);color:#000">0.4471</span>
<div class="row odd" style="left:62.2px;top:1486.2px;width:2807.6px;height:37.8px;"><div class="" style="left:1718.2px;top:0px;width:1.3px;height:37.8px;background:#fff"></div></div>
<svg class="tri" viewBox="0 0 11 18" style="left:71.2px;top:1500.3px"><path d="M1.4 1.6L9.3 9L1.4 16.4Z"/></svg>
<span class="t m" style="left:91.04px;top:1496.88px;font-size:24.3px;transform:scaleX(0.889);color:#16191f">9</span>
<span class="t m" style="left:170.24px;top:1494.88px;font-size:24.3px;transform:scaleX(0.889);color:#000">2023-09-07T17:15:06.088Z</span>
<span class="t m" style="left:534.34px;top:1494.88px;font-size:24.3px;transform:scaleX(0.889);color:#000">68f8efc9-ddf2-4d2b-96f4-bc34ce18fa67</span>
<a class="t m" style="left:1057.94px;top:1494.88px;font-size:24.3px;transform:scaleX(0.889);color:#2b73b9">2023/09/07/[$LATEST]a00d4dcd4949490d9115f2b36aa84f9c</a>
<span class="t m" style="left:1781.47px;top:1494.88px;font-size:24.3px;transform:scaleX(0.889);color:#000">3573.0</span>
<span class="t m" style="left:2068.94px;top:1494.88px;font-size:24.3px;transform:scaleX(0.889);color:#000">128</span>
<span class="t m" style="left:2290.27px;top:1494.88px;font-size:24.3px;transform:scaleX(0.889);color:#000">0.4466</span>
</main>
</body></html>
